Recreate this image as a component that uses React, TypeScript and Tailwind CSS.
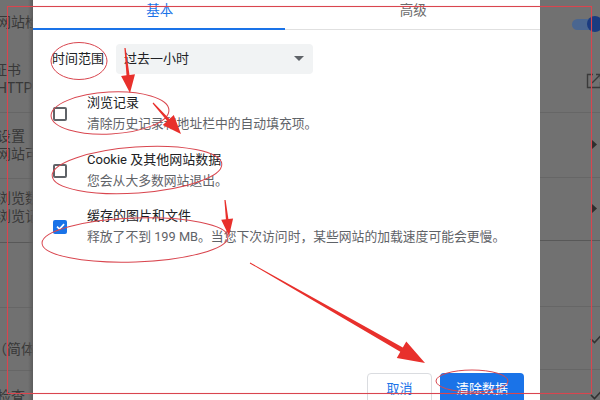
import React from "react";

type Pt = [number, number];

function arrowPoly(from: Pt, tip: Pt, w0: number, w1: number, headLen: number, headHalf: number): string {
  const [x1, y1] = from;
  const [x2, y2] = tip;
  const dx = x2 - x1;
  const dy = y2 - y1;
  const len = Math.hypot(dx, dy);
  const ux = dx / len;
  const uy = dy / len;
  const nx = -uy;
  const ny = ux;
  const bx = x2 - ux * headLen;
  const by = y2 - uy * headLen;
  const pts: Pt[] = [
    [x1 + nx * w0 / 2, y1 + ny * w0 / 2],
    [bx + nx * w1 / 2, by + ny * w1 / 2],
    [bx + nx * headHalf, by + ny * headHalf],
    [x2, y2],
    [bx - nx * headHalf, by - ny * headHalf],
    [bx - nx * w1 / 2, by - ny * w1 / 2],
    [x1 - nx * w0 / 2, y1 - ny * w0 / 2],
  ];
  return pts.map((p) => p.map((v) => v.toFixed(1)).join(",")).join(" ");
}

function Checkbox({ checked }: { checked?: boolean }) {
  if (checked) {
    return (
      <div className="w-[14px] h-[14px] rounded-[2px] bg-[#1a73e8] flex items-center justify-center shrink-0">
        <svg width="11" height="11" viewBox="0 0 12 12">
          <path d="M2.2 6.2 L4.9 8.8 L9.9 3.4" fill="none" stroke="#fff" strokeWidth="1.8" />
        </svg>
      </div>
    );
  }
  return <div className="w-[14px] h-[14px] rounded-[2px] border-2 border-[#5f6368] shrink-0" />;
}

function Item({ title, desc, checked }: { title: string; desc: string; checked?: boolean }) {
  return (
    <div className="flex items-center h-[42px]">
      <div className="w-[35px] pl-[1px] pt-[1px]">
        <Checkbox checked={checked} />
      </div>
      <div className="flex flex-col">
        <div className="text-[13px] leading-[21px] text-[#202124]">{title}</div>
        <div className="text-[12.8px] leading-[21px] text-[#5f6368] whitespace-nowrap">{desc}</div>
      </div>
    </div>
  );
}

function Sep({ dark }: { dark?: boolean }) {
  return <div className={dark ? "h-px bg-[#585858]" : "h-px bg-[#666666]"} />;
}

export default function App() {
  const red = "#e8302c";
  const thin = "#d9464f";
  return (
    <div className="relative w-[600px] h-[400px] overflow-hidden flex font-['Roboto','Noto_Sans_CJK_SC',sans-serif] bg-[#717171]">
      {/* left background strip */}
      <div className="w-[33px] h-full bg-[#717171] overflow-hidden relative shrink-0 text-[#383838] text-[14px] leading-[18px]">
        <div className="w-[80px] ml-[-3px] flex flex-col">
          <div className="h-[112px] flex flex-col">
            <div className="mt-[13px]">网站检查</div>
            <div className="mt-[30px] ml-[-4px]">证书</div>
            <div>HTTPS</div>
          </div>
          <Sep />
          <div className="h-[65px] flex flex-col">
            <div className="mt-[14px]">设置</div>
            <div>网站可</div>
          </div>
          <Sep />
          <div className="h-[63px] flex flex-col">
            <div className="mt-[10px]">浏览数</div>
            <div>浏览记</div>
          </div>
          <Sep dark />
          <div className="h-[64px]" />
          <Sep />
          <div className="h-[62px] flex flex-col">
            <div className="mt-[32px] ml-[-4px]">（简体</div>
          </div>
          <Sep />
          <div className="mt-[16px]">检查</div>
        </div>
        <div className="absolute right-0 top-0 w-[5px] h-full bg-gradient-to-r from-transparent to-[#5c5c5c]" />
      </div>

      {/* dialog */}
      <div className="w-[507px] h-full bg-white shrink-0 flex flex-col">
        <div className="relative h-[30px] flex border-b border-[#e0e0e0]">
          <div className="flex-1 flex justify-center pt-[2px] text-[13.5px] leading-[16px] text-[#1a73e8]">基本</div>
          <div className="flex-1 flex justify-center pt-[2px] text-[13.5px] leading-[16px] text-[#6b6b6b]">高级</div>
          <div className="absolute left-0 bottom-[-1px] w-[252px] h-[2px] bg-[#1a73e8]" />
        </div>
        <div className="flex flex-col pl-[19px] pr-[16px]">
          <div className="flex items-center mt-[14px] h-[30px]">
            <div className="text-[13px] text-[#202124] w-[64px]">时间范围</div>
            <div className="w-[197px] h-[30px] rounded-[4px] bg-[#f1f3f4] flex items-center justify-between pl-[8px] pr-[9px] text-[13px] text-[#202124]">
              <span>过去一小时</span>
              <svg width="10" height="6" viewBox="0 0 10 6">
                <path d="M0 0 L10 0 L5 5 Z" fill="#5f6368" />
              </svg>
            </div>
          </div>
          <div className="mt-[18px]">
            <Item title="浏览记录" desc="清除历史记录和地址栏中的自动填充项。" />
          </div>
          <div className="mt-[15px]">
            <Item title="Cookie 及其他网站数据" desc="您会从大多数网站退出。" />
          </div>
          <div className="mt-[14px]">
            <Item checked title="缓存的图片和文件" desc="释放了不到 199 MB。当您下次访问时，某些网站的加载速度可能会更慢。" />
          </div>
        </div>
        <div className="mt-auto flex justify-end gap-[8px] pr-[16px] translate-y-[5px]">
          <div className="w-[65px] h-[32px] rounded-[4px] border border-[#dadce0] bg-white flex items-center justify-center text-[13px] text-[#1a73e8]">取消</div>
          <div className="w-[84px] h-[32px] rounded-[4px] bg-[#1a73e8] flex items-center justify-center text-[13px] text-white">清除数据</div>
        </div>
      </div>

      {/* right background strip */}
      <div className="flex-1 h-full bg-[#717171] flex flex-col relative overflow-hidden">
        <div className="h-[112px] relative">
          <div className="absolute left-[32px] top-[19px] w-[34px] h-[11px] rounded-full bg-[#4a6690]" />
          <div className="absolute left-[47px] top-[16px] w-[16px] h-[16px] rounded-full bg-[#1a3b80]" />
          <svg className="absolute left-[46px] top-[73px]" width="16" height="16" viewBox="0 0 16 16">
            <path d="M7 1.5 H1.5 V14.5 H14.5 V9" fill="none" stroke="#3a3a3a" strokeWidth="1.4" />
            <path d="M6 10 L14.5 1.5 M10 1.5 H14.5 V6" fill="none" stroke="#3a3a3a" strokeWidth="1.4" />
          </svg>
        </div>
        <Sep />
        <div className="h-[64px] relative">
          <svg className="absolute left-[52px] top-[27px]" width="6" height="9" viewBox="0 0 6 9">
            <path d="M0 0 L5 4.5 L0 9 Z" fill="#2e2e2e" />
          </svg>
        </div>
        <Sep />
        <div className="h-[62px] relative">
          <svg className="absolute left-[52px] top-[26px]" width="6" height="9" viewBox="0 0 6 9">
            <path d="M0 0 L5 4.5 L0 9 Z" fill="#2e2e2e" />
          </svg>
        </div>
        <Sep dark />
        <div className="h-[65px]" />
        <Sep />
        <div className="h-[62px] relative">
          <svg className="absolute left-[50px] top-[27px]" width="12" height="10" viewBox="0 0 12 10">
            <path d="M1 5 L4.5 8.5 L11 1.5" fill="none" stroke="#333" strokeWidth="1.6" />
          </svg>
        </div>
        <Sep />
        <div className="h-[30px] relative">
          <svg className="absolute left-[50px] top-[20px]" width="12" height="10" viewBox="0 0 12 10">
            <path d="M1 5 L4.5 8.5 L11 1.5" fill="none" stroke="#333" strokeWidth="1.6" />
          </svg>
        </div>
      </div>

      {/* annotation overlay */}
      <svg className="absolute left-0 top-0 pointer-events-none" width="600" height="400" viewBox="0 0 600 400">
        <rect x="7.5" y="6.5" width="584" height="387" fill="none" stroke={thin} strokeWidth="1.1" />
        <ellipse cx="79" cy="61" rx="28" ry="18.5" fill="none" stroke={thin} strokeWidth="1" />
        <ellipse cx="110" cy="113" rx="59" ry="21" fill="none" stroke={thin} strokeWidth="1" transform="rotate(-3 110 113)" />
        <ellipse cx="137" cy="170" rx="85" ry="23" fill="none" stroke={thin} strokeWidth="1" transform="rotate(-4 137 170)" />
        <ellipse cx="135" cy="240" rx="93" ry="22" fill="none" stroke={thin} strokeWidth="1" transform="rotate(-2 135 240)" />
        <ellipse cx="472" cy="381" rx="36" ry="11" fill="none" stroke={thin} strokeWidth="1" />
        <polygon points={arrowPoly([125, 48], [130, 93], 1.2, 3, 18, 7)} fill={red} />
        <polygon points={arrowPoly([153, 103], [181, 134], 1.2, 3, 19, 7.5)} fill={red} />
        <polygon points={arrowPoly([225, 200], [229, 236], 1.2, 2.5, 17, 6)} fill={red} />
        <polygon points={arrowPoly([250, 263], [425, 363], 1, 5, 27, 9.5)} fill={red} />
      </svg>
    </div>
  );
}
